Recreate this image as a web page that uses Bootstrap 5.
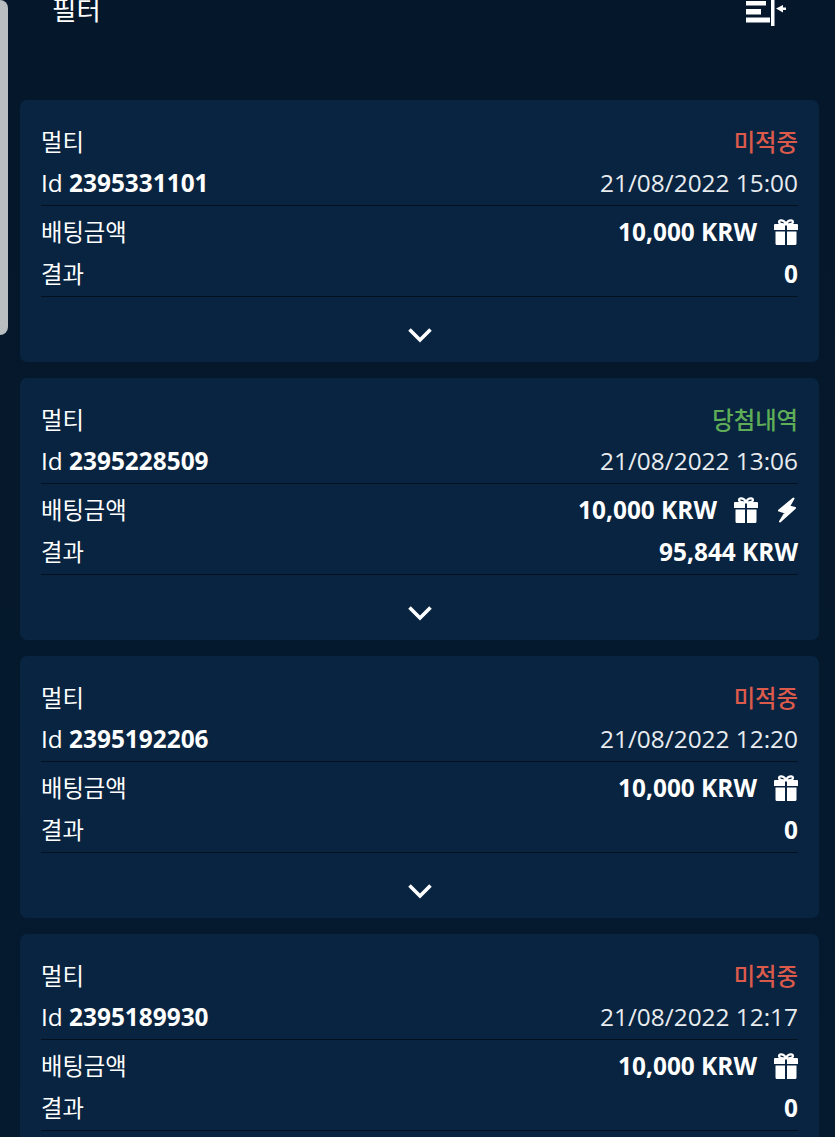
<!DOCTYPE html>
<html lang="ko">
<head>
  <meta charset="UTF-8" />
  <title>필터</title>
  <meta name="viewport" content="width=device-width, initial-scale=1" />
  <link href="https://cdn.jsdelivr.net/npm/bootstrap@5.3.2/dist/css/bootstrap.min.css" rel="stylesheet">
  <style>
    html, body { height: 100%; }
    body {
      background: linear-gradient(#05172a, #051a2f);
      color: #fff;
      font-family: "Open Sans", "Noto Sans CJK KR", sans-serif;
      font-size: 24.4px;
      overflow: hidden;
      position: relative;
    }
    .side-thumb {
      position: absolute; left: 0; top: 0;
      width: 8px; height: 335px;
      background: #b9bec1;
      border-radius: 0 8px 8px 0;
    }
    .top-bar { height: 100px; padding: 0 48px 0 52px; }
    .top-title { font-size: 26.500px; line-height: 38px; margin-top: -9px; }
    .top-icon { display: block; }
    .bet-list { padding: 0 16px 0 20px; }
    .bet-card {
      background: #082440;
      border: 0;
      border-radius: 7px;
      color: #fff;
      height: 261.5px;
      margin-bottom: 16.5px;
      padding: 21px 21px 0 21px;
      flex-shrink: 0;
    }
    .bet-row { height: 41px; line-height: 41px; white-space: nowrap; }
    .bet-row.ruled { border-bottom: 1px solid #03111f; height: 44px; }
    .bet-row.ruled + .bet-row { margin-top: 6px; }
    .ko { font-size: 23.3px; line-height: 43px; }
    .bet-id { color: #fff; font-weight: 700; }
    .bet-amount { font-weight: 700; }
    .amount-wrap { padding-bottom: 2px; }
    .st-lost { color: #dc5a4b; font-weight: 500; }
    .st-won { color: #5fad56; font-weight: 500; }
    .bet-date { color: #e8ecef; }
    .chev { display: block; margin: 30px auto 0; }
    .ic-gift { margin-left: 16px; margin-right: -1px; }
    .ic-bolt { margin-left: 19px; margin-right: 1px; }
  </style>
</head>
<body>
  <div class="side-thumb"></div>

  <div class="top-bar d-flex justify-content-between align-items-start">
    <div class="top-title">필터</div>
    <svg class="top-icon" width="41" height="27" viewBox="0 0 41 27" fill="#fff">
      <rect x="0" y="1" width="20" height="4.500"/>
      <rect x="0" y="9" width="15" height="5.500"/>
      <rect x="0" y="17.500" width="24" height="5"/>
      <rect x="25" y="0" width="3.500" height="26"/>
      <path d="M30 8.500l7-3.500v2.500h3v2.500h-3v2.500z"/>
    </svg>
  </div>

  <div class="bet-list d-flex flex-column">
    <div class="card bet-card">
      <div class="bet-row d-flex justify-content-between"><span class="ko">멀티</span><span class="ko st-lost">미적중</span></div>
      <div class="bet-row ruled d-flex justify-content-between"><span>Id <span class="bet-id">2395331101</span></span><span class="bet-date">21/08/2022 15:00</span></div>
      <div class="bet-row d-flex justify-content-between align-items-center"><span class="ko">배팅금액</span><span class="amount-wrap d-flex align-items-center"><span class="bet-amount">10,000 KRW</span><svg class="ic-gift" width="26" height="26" viewBox="0 0 26 26" fill="#fff"><path d="M1 6a1 1 0 0 1 1-1h10v6H1zM14 5h10a1 1 0 0 1 1 1v5H14zM2.500 12.500H12V26H4a1.500 1.500 0 0 1-1.500-1.500zM14 12.500h9.500v12A1.500 1.500 0 0 1 22 26h-8z"/><path d="M13 5.500C10 5.500 6 5 6 3s3-2 4.500-1S13 4 13 5.500zm0 0c0-1.500 1-2.500 2.500-3.500S20 1 20 3s-4 2.500-7 2.500z" fill="none" stroke="#fff" stroke-width="2.200"/></svg></span></div>
      <div class="bet-row ruled d-flex justify-content-between"><span class="ko">결과</span><span class="bet-amount">0</span></div>
      <svg class="chev" width="26" height="16" viewBox="0 0 26 16"><path d="M2.500 2.500 13 13 23.500 2.500" fill="none" stroke="#fff" stroke-width="3.600"/></svg>
    </div>

    <div class="card bet-card">
      <div class="bet-row d-flex justify-content-between"><span class="ko">멀티</span><span class="ko st-won">당첨내역</span></div>
      <div class="bet-row ruled d-flex justify-content-between"><span>Id <span class="bet-id">2395228509</span></span><span class="bet-date">21/08/2022 13:06</span></div>
      <div class="bet-row d-flex justify-content-between align-items-center"><span class="ko">배팅금액</span><span class="amount-wrap d-flex align-items-center"><span class="bet-amount">10,000 KRW</span><svg class="ic-gift" width="26" height="26" viewBox="0 0 26 26" fill="#fff"><path d="M1 6a1 1 0 0 1 1-1h10v6H1zM14 5h10a1 1 0 0 1 1 1v5H14zM2.500 12.500H12V26H4a1.500 1.500 0 0 1-1.500-1.500zM14 12.500h9.500v12A1.500 1.500 0 0 1 22 26h-8z"/><path d="M13 5.500C10 5.500 6 5 6 3s3-2 4.500-1S13 4 13 5.500zm0 0c0-1.500 1-2.500 2.500-3.500S20 1 20 3s-4 2.500-7 2.500z" fill="none" stroke="#fff" stroke-width="2.200"/></svg><svg class="ic-bolt" width="20" height="26" viewBox="0 0 20 26" fill="#fff" stroke="#fff" stroke-width="2" stroke-linejoin="round"><path d="M16.500 1.500 2 13.500 8.500 15.500 3 24.500 18 11 12 9.500z"/></svg></span></div>
      <div class="bet-row ruled d-flex justify-content-between"><span class="ko">결과</span><span class="bet-amount">95,844 KRW</span></div>
      <svg class="chev" width="26" height="16" viewBox="0 0 26 16"><path d="M2.500 2.500 13 13 23.500 2.500" fill="none" stroke="#fff" stroke-width="3.600"/></svg>
    </div>

    <div class="card bet-card">
      <div class="bet-row d-flex justify-content-between"><span class="ko">멀티</span><span class="ko st-lost">미적중</span></div>
      <div class="bet-row ruled d-flex justify-content-between"><span>Id <span class="bet-id">2395192206</span></span><span class="bet-date">21/08/2022 12:20</span></div>
      <div class="bet-row d-flex justify-content-between align-items-center"><span class="ko">배팅금액</span><span class="amount-wrap d-flex align-items-center"><span class="bet-amount">10,000 KRW</span><svg class="ic-gift" width="26" height="26" viewBox="0 0 26 26" fill="#fff"><path d="M1 6a1 1 0 0 1 1-1h10v6H1zM14 5h10a1 1 0 0 1 1 1v5H14zM2.500 12.500H12V26H4a1.500 1.500 0 0 1-1.500-1.500zM14 12.500h9.500v12A1.500 1.500 0 0 1 22 26h-8z"/><path d="M13 5.500C10 5.500 6 5 6 3s3-2 4.500-1S13 4 13 5.500zm0 0c0-1.500 1-2.500 2.500-3.500S20 1 20 3s-4 2.500-7 2.500z" fill="none" stroke="#fff" stroke-width="2.200"/></svg></span></div>
      <div class="bet-row ruled d-flex justify-content-between"><span class="ko">결과</span><span class="bet-amount">0</span></div>
      <svg class="chev" width="26" height="16" viewBox="0 0 26 16"><path d="M2.500 2.500 13 13 23.500 2.500" fill="none" stroke="#fff" stroke-width="3.600"/></svg>
    </div>

    <div class="card bet-card">
      <div class="bet-row d-flex justify-content-between"><span class="ko">멀티</span><span class="ko st-lost">미적중</span></div>
      <div class="bet-row ruled d-flex justify-content-between"><span>Id <span class="bet-id">2395189930</span></span><span class="bet-date">21/08/2022 12:17</span></div>
      <div class="bet-row d-flex justify-content-between align-items-center"><span class="ko">배팅금액</span><span class="amount-wrap d-flex align-items-center"><span class="bet-amount">10,000 KRW</span><svg class="ic-gift" width="26" height="26" viewBox="0 0 26 26" fill="#fff"><path d="M1 6a1 1 0 0 1 1-1h10v6H1zM14 5h10a1 1 0 0 1 1 1v5H14zM2.500 12.500H12V26H4a1.500 1.500 0 0 1-1.500-1.500zM14 12.500h9.500v12A1.500 1.500 0 0 1 22 26h-8z"/><path d="M13 5.500C10 5.500 6 5 6 3s3-2 4.500-1S13 4 13 5.500zm0 0c0-1.500 1-2.500 2.500-3.500S20 1 20 3s-4 2.500-7 2.500z" fill="none" stroke="#fff" stroke-width="2.200"/></svg></span></div>
      <div class="bet-row ruled d-flex justify-content-between"><span class="ko">결과</span><span class="bet-amount">0</span></div>
    </div>
  </div>

  <script src="https://cdn.jsdelivr.net/npm/bootstrap@5.3.2/dist/js/bootstrap.bundle.min.js"></script>
</body>
</html>
